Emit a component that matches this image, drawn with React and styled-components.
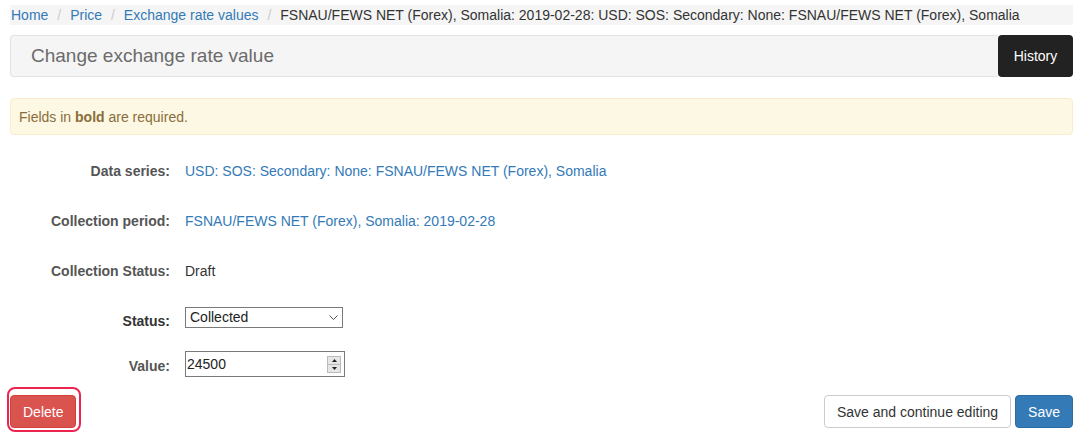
import React from "react";
import styled, { createGlobalStyle } from "styled-components";

// GLOBAL //

const GlobalStyle = createGlobalStyle`
  html, body {
    margin: 0;
    padding: 0;
    background: #fff;
  }
  body {
    font-family: "Liberation Sans", Arial, sans-serif;
    font-size: 14px;
    color: #333;
  }
`;

const Page = styled.div`
  width: 1082px;
  box-sizing: border-box;
  padding: 5px 9px 0 10px;
`;

// BREADCRUMB //

const Crumbs = styled.ol`
  display: flex;
  align-items: center;
  height: 20px;
  margin: 0;
  padding: 0 1px;
  list-style: none;
  background: #f5f5f5;
  line-height: 20px;
  white-space: nowrap;
`;

const Crumb = styled.li`
  color: ${(p) => (p.$active ? "#333" : "#337ab7")};

  &:not(:first-child)::before {
    content: "/\\00a0";
    padding: 0 5px 0 9px;
    color: #ccc;
  }
`;

// HEADER //

const HeaderRow = styled.div`
  display: flex;
  margin-top: 10px;
  height: 42px;
`;

const TitlePanel = styled.div`
  flex: 1;
  display: flex;
  align-items: center;
  box-sizing: border-box;
  padding-left: 20px;
  background: #f5f5f5;
  border: 1px solid #e3e3e3;
  border-right: none;
  border-radius: 4px 0 0 4px;
`;

const Title = styled.h1`
  margin: 0;
  font-size: 19px;
  font-weight: normal;
  color: #6b6b6b;
`;

const HistoryButton = styled.button`
  width: 75px;
  border: none;
  border-radius: 4px;
  background: #222;
  color: #fff;
  font: inherit;
  font-size: 14px;
`;

// ALERT //

const Alert = styled.div`
  margin-top: 21px;
  height: 37px;
  box-sizing: border-box;
  display: flex;
  align-items: center;
  padding: 0 8px;
  background: #fcf8e3;
  border: 1px solid #faebcc;
  border-radius: 4px;
  color: #8a6d3b;
`;

// FORM //

const Form = styled.div`
  margin-top: 11px;
  display: flex;
  flex-direction: column;
`;

const Row = styled.div`
  display: flex;
  align-items: center;
  height: ${(p) => p.$h}px;
`;

const Label = styled.div`
  width: 160px;
  text-align: right;
  font-weight: bold;
  color: ${(p) => (p.$required ? "#333" : "#555")};
  padding-top: ${(p) => p.$drop || 0}px;
`;

const Value = styled.div`
  margin-left: 15px;
  color: ${(p) => (p.$link ? "#337ab7" : "#333")};
`;

const SelectWrap = styled.div`
  position: relative;
  margin-left: 15px;
  width: 158px;
  height: 21px;
`;

const Select = styled.select`
  appearance: none;
  width: 100%;
  height: 100%;
  box-sizing: border-box;
  margin: 0;
  padding: 0 0 0 4px;
  border: 1px solid #7a7a7a;
  border-radius: 0;
  background: #fff;
  font: inherit;
  color: #222;
`;

const Chevron = styled.svg`
  position: absolute;
  right: 5px;
  top: 8px;
  pointer-events: none;
`;

const NumberBox = styled.div`
  margin-left: 15px;
  width: 160px;
  height: 26px;
  box-sizing: border-box;
  display: flex;
  align-items: center;
  border: 1px solid #7a7a7a;
  background: #fff;
`;

const NumberInput = styled.input`
  flex: 1;
  min-width: 0;
  border: none;
  outline: none;
  padding: 0 0 0 1px;
  font: inherit;
  color: #222;
`;

const Spinner = styled.div`
  width: 14px;
  height: 17px;
  margin-right: 3px;
  display: flex;
  flex-direction: column;
  border: 1px solid #bbb;
  box-sizing: border-box;
`;

const SpinHalf = styled.div`
  flex: 1;
  display: flex;
  align-items: center;
  justify-content: center;
  background: #e6e6e6;
  & + & {
    border-top: 1px solid #bbb;
  }
`;

// FOOTER //

const Footer = styled.div`
  display: flex;
  align-items: flex-end;
  justify-content: space-between;
  margin-top: -3px;
  margin-left: -3px;
`;

const Highlight = styled.div`
  padding: 6px 3px 2px 1px;
  border: 2px solid #ec2550;
  border-radius: 8px;
`;

const Actions = styled.div`
  display: flex;
  gap: 4px;
  margin-bottom: 4px;
`;

const Button = styled.button`
  height: 33px;
  padding: 0 12px;
  border: 1px solid ${(p) => p.$border};
  border-radius: 4px;
  background: ${(p) => p.$bg};
  color: ${(p) => p.$color};
  font: inherit;
  font-size: 14px;
`;

const App = () => {
  return (
    <Page>
      <GlobalStyle />
      <Crumbs>
        <Crumb>Home</Crumb>
        <Crumb>Price</Crumb>
        <Crumb>Exchange rate values</Crumb>
        <Crumb $active>
          FSNAU/FEWS NET (Forex), Somalia: 2019-02-28: USD: SOS: Secondary: None: FSNAU/FEWS NET (Forex), Somalia
        </Crumb>
      </Crumbs>

      <HeaderRow>
        <TitlePanel>
          <Title>Change exchange rate value</Title>
        </TitlePanel>
        <HistoryButton>History</HistoryButton>
      </HeaderRow>

      <Alert>
        <span>
          Fields in <b>bold</b> are required.
        </span>
      </Alert>

      <Form>
        <Row $h={50}>
          <Label>Data series:</Label>
          <Value $link>USD: SOS: Secondary: None: FSNAU/FEWS NET (Forex), Somalia</Value>
        </Row>
        <Row $h={50}>
          <Label>Collection period:</Label>
          <Value $link>FSNAU/FEWS NET (Forex), Somalia: 2019-02-28</Value>
        </Row>
        <Row $h={50}>
          <Label>Collection Status:</Label>
          <Value>Draft</Value>
        </Row>
        <Row $h={42}>
          <Label $required $drop={8}>Status:</Label>
          <SelectWrap>
            <Select defaultValue="Collected">
              <option>Collected</option>
              <option>Draft</option>
            </Select>
            <Chevron width="9" height="6" viewBox="0 0 9 6">
              <path d="M0.5 0.5 L4.5 4.5 L8.5 0.5" fill="none" stroke="#555" strokeWidth="1" />
            </Chevron>
          </SelectWrap>
        </Row>
        <Row $h={52}>
          <Label $drop={4}>Value:</Label>
          <NumberBox>
            <NumberInput type="text" defaultValue="24500" />
            <Spinner>
              <SpinHalf>
                <svg width="5" height="3" viewBox="0 0 5 3">
                  <path d="M0 3 L2.5 0 L5 3 Z" fill="#222" />
                </svg>
              </SpinHalf>
              <SpinHalf>
                <svg width="5" height="3" viewBox="0 0 5 3">
                  <path d="M0 0 L2.5 3 L5 0 Z" fill="#222" />
                </svg>
              </SpinHalf>
            </Spinner>
          </NumberBox>
        </Row>
      </Form>

      <Footer>
        <Highlight>
          <Button $bg="#d9534f" $border="#d43f3a" $color="#fff">
            Delete
          </Button>
        </Highlight>
        <Actions>
          <Button $bg="#fff" $border="#ccc" $color="#333">
            Save and continue editing
          </Button>
          <Button $bg="#337ab7" $border="#2e6da4" $color="#fff">
            Save
          </Button>
        </Actions>
      </Footer>
    </Page>
  );
};

export default App;
